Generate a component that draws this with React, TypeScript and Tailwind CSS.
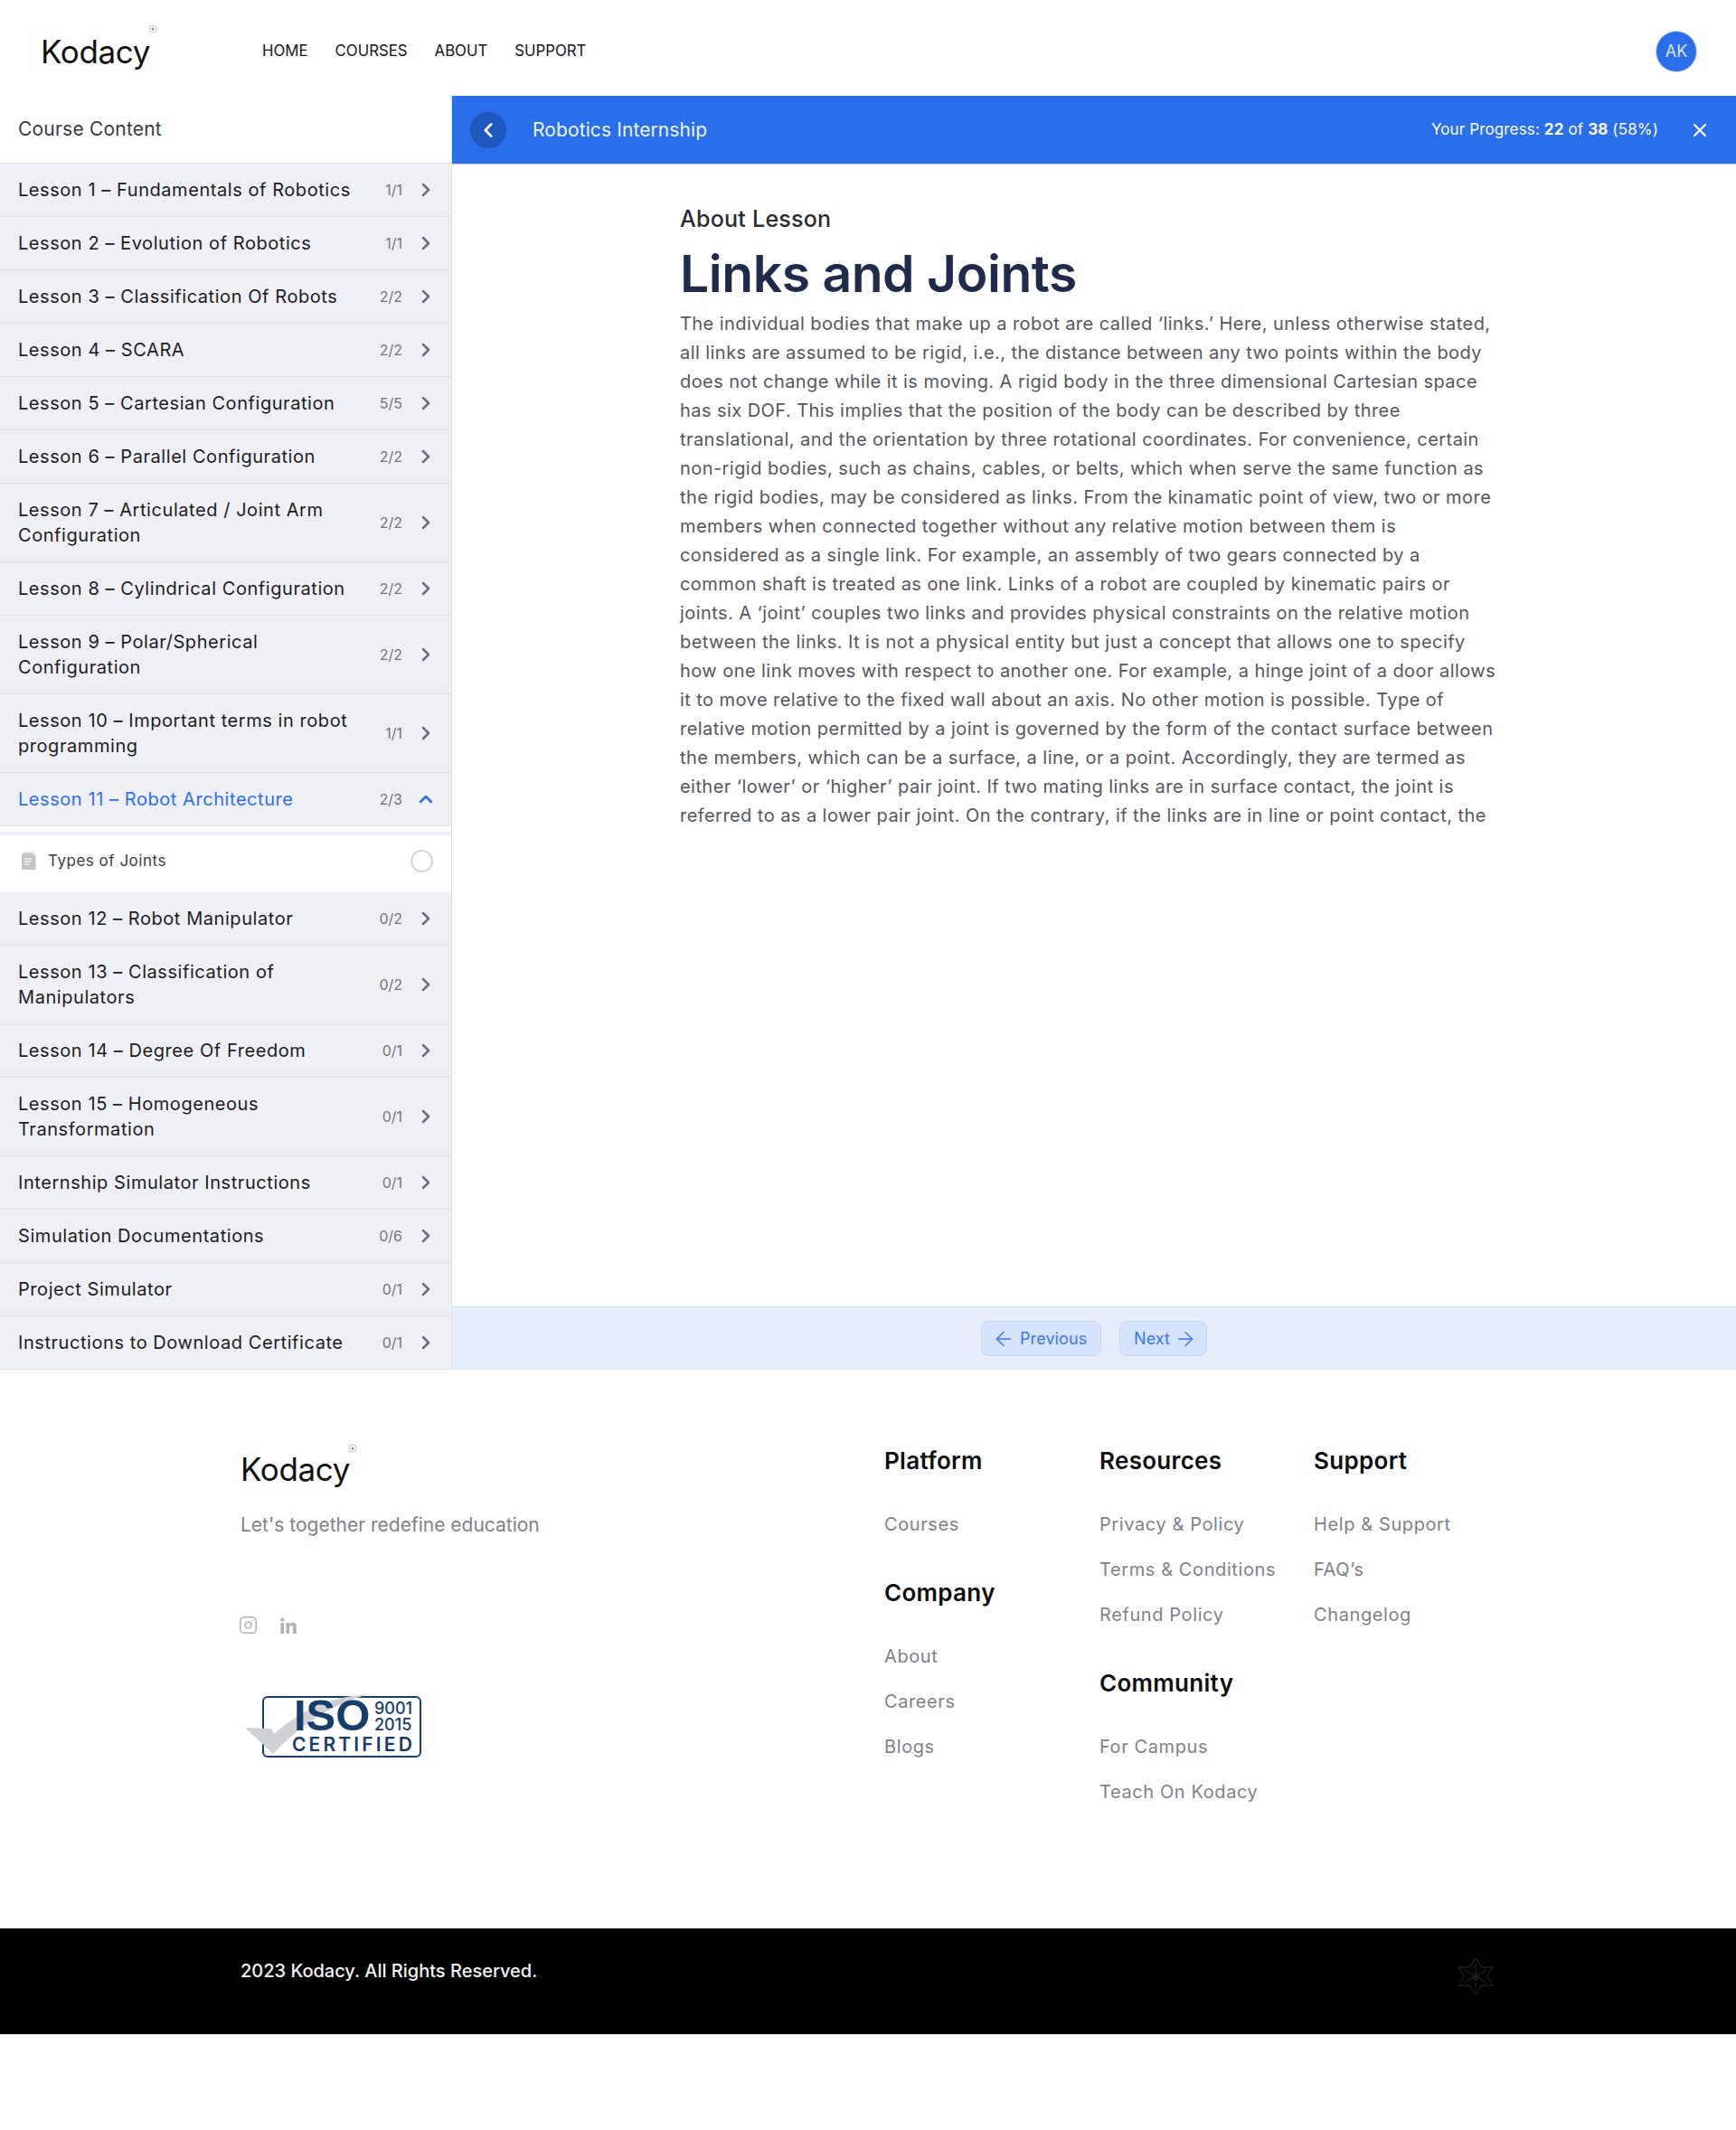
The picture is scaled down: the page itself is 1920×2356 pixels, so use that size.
import React from "react";
import { ChevronRight, ChevronUp, ChevronLeft, X, ArrowLeft, ArrowRight, Instagram } from "lucide-react";

const lessons: { t: string[]; c: string }[] = [
  { t: ["Lesson 1 – Fundamentals of Robotics"], c: "1/1" },
  { t: ["Lesson 2 – Evolution of Robotics"], c: "1/1" },
  { t: ["Lesson 3 – Classification Of Robots"], c: "2/2" },
  { t: ["Lesson 4 – SCARA"], c: "2/2" },
  { t: ["Lesson 5 – Cartesian Configuration"], c: "5/5" },
  { t: ["Lesson 6 – Parallel Configuration"], c: "2/2" },
  { t: ["Lesson 7 – Articulated / Joint Arm", "Configuration"], c: "2/2" },
  { t: ["Lesson 8 – Cylindrical Configuration"], c: "2/2" },
  { t: ["Lesson 9 – Polar/Spherical", "Configuration"], c: "2/2" },
  { t: ["Lesson 10 – Important terms in robot", "programming"], c: "1/1" },
];
const lessons2: { t: string[]; c: string }[] = [
  { t: ["Lesson 12 – Robot Manipulator"], c: "0/2" },
  { t: ["Lesson 13 – Classification of", "Manipulators"], c: "0/2" },
  { t: ["Lesson 14 – Degree Of Freedom"], c: "0/1" },
  { t: ["Lesson 15 – Homogeneous", "Transformation"], c: "0/1" },
  { t: ["Internship Simulator Instructions"], c: "0/1" },
  { t: ["Simulation Documentations"], c: "0/6" },
  { t: ["Project Simulator"], c: "0/1" },
  { t: ["Instructions to Download Certificate"], c: "0/1" },
];
const para = [
  "The individual bodies that make up a robot are called ‘links.’ Here, unless otherwise stated,",
  "all links are assumed to be rigid, i.e., the distance between any two points within the body",
  "does not change while it is moving. A rigid body in the three dimensional Cartesian space",
  "has six DOF. This implies that the position of the body can be described by three",
  "translational, and the orientation by three rotational coordinates. For convenience, certain",
  "non-rigid bodies, such as chains, cables, or belts, which when serve the same function as",
  "the rigid bodies, may be considered as links. From the kinamatic point of view, two or more",
  "members when connected together without any relative motion between them is",
  "considered as a single link. For example, an assembly of two gears connected by a",
  "common shaft is treated as one link. Links of a robot are coupled by kinematic pairs or",
  "joints. A ‘joint’ couples two links and provides physical constraints on the relative motion",
  "between the links. It is not a physical entity but just a concept that allows one to specify",
  "how one link moves with respect to another one. For example, a hinge joint of a door allows",
  "it to move relative to the fixed wall about an axis. No other motion is possible. Type of",
  "relative motion permitted by a joint is governed by the form of the contact surface between",
  "the members, which can be a surface, a line, or a point. Accordingly, they are termed as",
  "either ‘lower’ or ‘higher’ pair joint. If two mating links are in surface contact, the joint is",
  "referred to as a lower pair joint. On the contrary, if the links are in line or point contact, the",
];

function Row({ t, c }: { t: string[]; c: string }) {
  return (
    <div className="flex items-center bg-[#eff0f5] border-b border-[#e0e2e8] pl-5 pr-[16px] py-[15px]">
      <div className="flex-1 text-[20px] leading-[28px] text-[#1c1c22] tracking-[0.028em]">
        {t.map((l) => (
          <div key={l} className="whitespace-nowrap">{l}</div>
        ))}
      </div>
      <span className="text-[16px] text-[#71737c] mr-[14px]">{c}</span>
      <ChevronRight size={24} strokeWidth={2.5} className="text-[#6b6e78]" />
    </div>
  );
}

function Logo({ top }: { top: string }) {
  return (
    <div className="relative w-[130px] h-[46px]">
      <span className="text-[35px] leading-[46px] font-normal text-[#111] tracking-[-0.01em]">Kodacy</span>
      <svg className={"absolute left-[119px] " + top} width="10" height="10" viewBox="0 0 10 10">
        <circle cx="5" cy="5" r="4" fill="none" stroke="#c4c4c4" strokeWidth="1" />
        <circle cx="5" cy="5" r="1.5" fill="#888" />
      </svg>
    </div>
  );
}

function FootCol({ title, links, cls }: { title: string; links: string[]; cls?: string }) {
  return (
    <div className={cls}>
      <h4 className="text-[26px] leading-[36px] font-semibold text-[#0d0d12] tracking-[0.012em]">{title}</h4>
      <div className="mt-[38px] flex flex-col gap-[22px]">
        {links.map((l) => (
          <a key={l} className="text-[20px] leading-[28px] text-[#7f8189] tracking-[0.03em]">{l}</a>
        ))}
      </div>
    </div>
  );
}

export default function App() {
  return (
    <div className="min-h-[2356px] bg-white font-['Inter',sans-serif]">
      <header className="h-[106px] flex items-center pt-[7px] pl-[45px] pr-[43px]">
        <Logo top="top-[-7px]" />
        <nav className="ml-[115px] flex gap-[30px] text-[16.8px] text-[#14141a]">
          <a>HOME</a>
          <a>COURSES</a>
          <a>ABOUT</a>
          <a>SUPPORT</a>
        </nav>
        <div className="ml-auto w-[46px] h-[46px] rounded-full bg-[#2a6eeb] border border-[#d5d9e2] flex items-center justify-center text-[18px] text-[#dbe5fb]">
          AK
        </div>
      </header>
      <main className="flex">
        <aside className="w-[500px] shrink-0 border-r border-[#e0e2e8]">
          <div className="h-[75px] flex items-center pl-5 border-b border-[#e0e2e8] text-[21px] tracking-[0.01em] text-[#3a3b42]">
            Course Content
          </div>
          {lessons.map((l) => (
            <Row key={l.t[0]} {...l} />
          ))}
          <div className="flex items-center bg-[#eff0f5] border-b border-[#e0e2e8] pl-5 pr-[16px] py-[15px]">
            <div className="flex-1 text-[20px] leading-[28px] text-[#2b6ff0] tracking-[0.028em]">Lesson 11 – Robot Architecture</div>
            <span className="text-[16px] text-[#71737c] mr-[14px]">2/3</span>
            <ChevronUp size={24} strokeWidth={2.5} className="text-[#2b6ff0]" />
          </div>
          <div className="pt-[6px] bg-white">
            <div className="h-[4px] bg-[#eff0f5]" />
            <div className="h-[63px] flex items-center pb-[6px] pl-[23px] pr-[20px]">
              <svg width="18" height="21" viewBox="0 0 18 21" className="shrink-0">
                <path d="M4 0h9l4 4v16H4z" fill="#dedede" />
                <path d="M1 2h10l5 4v14H1z" fill="#c4c4c4" />
                <path d="M4 8h8M4 11h8M4 14h5" stroke="#f2f2f2" strokeWidth="1.4" />
              </svg>
              <span className="ml-[12px] flex-1 text-[17px] text-[#3c3d44] tracking-[0.03em]">Types of Joints</span>
              <span className="w-[25px] h-[25px] rounded-full border-2 border-[#d3d5da]" />
            </div>
          </div>
          {lessons2.map((l) => (
            <Row key={l.t[0]} {...l} />
          ))}
        </aside>
        <section className="flex-1 flex flex-col">
          <div className="h-[75px] bg-[#296eea] flex items-center pl-5 pr-[28px] text-white shadow-[0_1px_1px_#d5d5d5]">
            <span className="w-[40px] h-[40px] rounded-full bg-[#1f58bd] flex items-center justify-center">
              <ChevronLeft size={26} strokeWidth={2.5} />
            </span>
            <span className="ml-[29px] mt-[1px] text-[21px] tracking-[0.005em] text-[#f0f5ff]">Robotics Internship</span>
            <span className="ml-auto mt-[1px] text-[17px] tracking-[0.008em]">
              Your Progress: <b>22</b> of <b>38</b> (58%)
            </span>
            <X size={24} strokeWidth={2.2} className="ml-[34px]" />
          </div>
          <div className="flex-1 pl-[252px] pt-[42px] overflow-hidden">
            <h3 className="text-[25px] leading-[38px] font-medium text-[#2a2b33] tracking-[0.01em]">About Lesson</h3>
            <h1 className="mt-[10px] text-[57px] leading-[64px] font-semibold text-[#1f2a4d] tracking-[-0.008em]">Links and Joints</h1>
            <div className="mt-[7px] text-[20px] leading-[32px] text-[#55565e] tracking-[0.022em]">
              {para.map((l) => (
                <div key={l} className="whitespace-nowrap">{l}</div>
              ))}
            </div>
          </div>
          <div className="h-[70px] bg-[#e6eefc] border-t border-[#cfdcf8] flex items-center justify-center gap-5 text-[18px] tracking-[0.005em] text-[#3b76ee]">
            <a className="h-[39px] w-[133px] rounded-lg bg-[#d5e3fb] border border-[#c5d6f7] flex items-center pl-[11px] gap-[5px]">
              <ArrowLeft size={26} strokeWidth={1.3} /> Previous
            </a>
            <a className="h-[39px] w-[97px] rounded-lg bg-[#d5e3fb] border border-[#c5d6f7] flex items-center pl-[15px] gap-[4px]">
              Next <ArrowRight size={26} strokeWidth={1.3} />
            </a>
          </div>
        </section>
      </main>
      <footer>
        <div className="h-[618px] flex pl-[266px] pt-[83px]">
          <div className="w-[712px]">
            <div className="mt-[4px]">
              <Logo top="top-[-5px]" />
            </div>
            <p className="mt-[24px] text-[21px] leading-[30px] text-[#7f8189]">Let's together redefine education</p>
            <div className="mt-[85px] flex gap-[25px] items-center text-[#b0b2b8]">
              <Instagram size={21} strokeWidth={1.7} className="ml-[-2px]" />
              <svg width="18" height="18" viewBox="0 0 18 18" fill="currentColor">
                <circle cx="2.2" cy="2.4" r="2.1" />
                <path d="M.4 6h3.600v12H.4zM6.400 6h3.400v1.700C10.500 6.500 12 5.700 13.600 5.700c3.200 0 4.200 2.100 4.200 5.200V18h-3.600v-6.300c0-1.500-.3-2.900-2-2.900-1.800 0-2.200 1.400-2.200 2.900V18H6.400z" />
              </svg>
            </div>
            <div className="relative mt-[66px] ml-[5px] w-[196px] h-[70px]">
              <div className="absolute left-[19px] top-[2px] w-[176px] h-[68px] rounded-[6px] border-2 border-[#173d6c]" />
              <svg className="absolute left-0 top-0" width="196" height="70" viewBox="0 0 196 70">
                <path d="M0 37 L29 38 L32 44 C60 20 90 3 137 0 C100 10 65 30 31 66 Z" fill="#cfd1d4" />
              </svg>
              <span className="absolute left-[54px] top-[5px] text-[49px] leading-[36px] font-bold text-[#173d6c] font-['Liberation_Sans',sans-serif]">ISO</span>
              <span className="absolute left-[143px] top-[8px] text-[18px] leading-[15px] font-medium text-[#173d6c]">9001</span>
              <span className="absolute left-[143px] top-[26px] text-[18px] leading-[15px] font-medium text-[#173d6c]">2015</span>
              <span className="absolute left-[52px] top-[47px] text-[21px] leading-[17px] font-semibold tracking-[0.15em] text-[#173d6c]">CERTIFIED</span>
            </div>
          </div>
          <div className="w-[238px]">
            <FootCol title="Platform" links={["Courses"]} />
            <FootCol cls="mt-[44px]" title="Company" links={["About", "Careers", "Blogs"]} />
          </div>
          <div className="w-[237px]">
            <FootCol title="Resources" links={["Privacy & Policy", "Terms & Conditions", "Refund Policy"]} />
            <FootCol cls="mt-[44px]" title="Community" links={["For Campus", "Teach On Kodacy"]} />
          </div>
          <div className="w-[237px]">
            <FootCol title="Support" links={["Help & Support", "FAQ’s", "Changelog"]} />
          </div>
        </div>
        <div className="h-[117px] bg-black flex pl-[266px] pr-[268px] pt-[33px] justify-between text-white">
          <span className="text-[20px] leading-[28px] font-medium text-[#f4f4f4]">2023 Kodacy. All Rights Reserved.</span>
          <svg width="40" height="44" viewBox="0 0 40 44" className="mt-[-2px]" fill="none" stroke="#1e1e1e" strokeWidth="1.3">
            <path d="M20 2 L27 12 L39 12 L33 22 L39 32 L27 32 L20 42 L13 32 L1 32 L7 22 L1 12 L13 12 Z" />
            <path d="M20 8 V36 M8 15 L32 29 M32 15 L8 29" />
            <circle cx="20" cy="22" r="3" />
          </svg>
        </div>
      </footer>
    </div>
  );
}
